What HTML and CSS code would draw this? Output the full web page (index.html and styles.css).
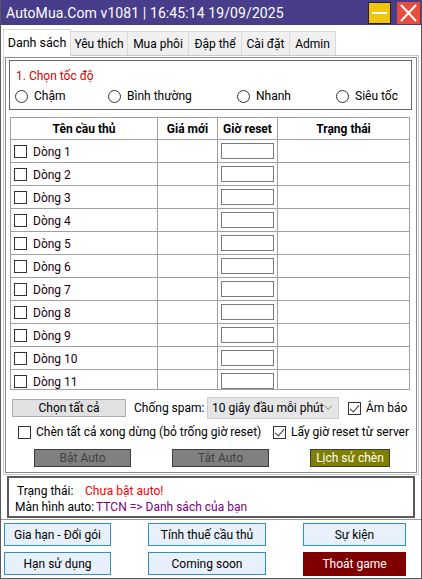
FILE: index.html
```html
<!DOCTYPE html>
<html lang="vi">
<head>
    <meta charset="UTF-8">
    <meta name="viewport" content="width=device-width, initial-scale=1.0">
    <title>AutoMua.Com</title>
    <link rel="stylesheet" href="styles.css">
</head>
<body>
<div class="window">
    <div class="titlebar">
        <span class="title">AutoMua.Com v1081 | 16:45:14 19/09/2025</span>
        <span class="tb-btn tb-min"><i></i></span>
        <span class="tb-btn tb-close">
            <svg width="23" height="22" viewBox="0 0 23 22"><path d="M4 3 L19 19 M19 3 L4 19" stroke="#fff" stroke-width="2" fill="none"/></svg>
        </span>
    </div>

    <div class="main">
        <div class="tabs">
            <span class="tab active">Danh sách</span>
            <span class="tab w57">Yêu thích</span>
            <span class="tab w61">Mua phôi</span>
            <span class="tab w53">Đập thể</span>
            <span class="tab w48">Cài đặt</span>
            <span class="tab w46">Admin</span>
        </div>

        <div class="tabpage">
            <div class="group">
                <div class="group-title">1. Chọn tốc độ</div>
                <div class="radios">
                    <span class="radio r1"><i></i>Chậm</span>
                    <span class="radio r2"><i></i>Bình thường</span>
                    <span class="radio r3"><i></i>Nhanh</span>
                    <span class="radio"><i></i>Siêu tốc</span>
                </div>
            </div>

            <div class="grid">
                <table>
                    <thead>
                        <tr>
                            <th class="c1">Tên cầu thủ</th>
                            <th class="c2">Giá mới</th>
                            <th class="c3">Giờ reset</th>
                            <th class="c4">Trạng thái</th>
                        </tr>
                    </thead>
                    <tbody id="rows"></tbody>
                </table>
            </div>

            <div class="ctl-row1">
                <span class="btn btn-all">Chọn tất cả</span>
                <span class="lbl-spam">Chống spam:</span>
                <span class="select">10 giây đầu mỗi phút
                    <svg width="9" height="6" viewBox="0 0 9 6"><path d="M0.5 0.5 L4.5 4.5 L8.5 0.5" stroke="#777" fill="none"/></svg>
                </span>
                <span class="chk checked"></span>
                <span class="chk-lbl">Âm báo</span>
            </div>

            <div class="ctl-row2">
                <span class="chk"></span>
                <span class="chk-lbl lbl-stop">Chèn tất cả xong dừng (bỏ trống giờ reset)</span>
                <span class="chk checked"></span>
                <span class="chk-lbl">Lấy giờ reset từ server</span>
            </div>

            <div class="ctl-row3">
                <span class="btn-auto b-on">Bật Auto</span>
                <span class="btn-auto b-off">Tắt Auto</span>
                <span class="btn-hist">Lịch sử chèn</span>
            </div>
        </div>

        <div class="status">
            <div><span class="st-lbl">Trạng thái:</span><span class="st-red">Chưa bật auto!</span></div>
            <div><span class="st-lbl2">Màn hình auto:</span><span class="st-purple">TTCN =&gt; Danh sách của bạn</span></div>
        </div>
    </div>

    <div class="footer">
        <span class="fbtn f1">Gia hạn - Đổi gói</span>
        <span class="fbtn f2">Tính thuế cầu thủ</span>
        <span class="fbtn f3">Sự kiện</span>
        <span class="fbtn f1">Hạn sử dụng</span>
        <span class="fbtn f2">Coming soon</span>
        <span class="fbtn f3 exit">Thoát game</span>
    </div>
</div>

<script>
    const $rows = document.getElementById('rows');
    for (let i = 1; i <= 11; i += 1) {
        const tr = document.createElement('tr');
        tr.innerHTML = '<td class="c1"><span class="chk"></span><span class="name">Dòng ' + i + '</span></td>'
            + '<td class="c2"></td>'
            + '<td class="c3"><span class="box"></span></td>'
            + '<td class="c4"></td>';
        $rows.appendChild(tr);
    }
</script>
</body>
</html>
```

FILE: styles.css
```css
* { box-sizing: border-box; }
body { margin: 0; font-family: Roboto, "Noto Sans", sans-serif; font-size: 12px; color: #000; background: #fff; white-space: nowrap; }

.window { width: 422px; height: 579px; border: 1px solid #5a5a5a; border-top: none; background: #fff; overflow: hidden; }

.titlebar { height: 25px; background: #483d8b; display: flex; align-items: center; margin: 0 -1px; }
.title { color: #fff; font-size: 14px; padding-left: 6px; flex: 1; letter-spacing: 0.1px; }
.tb-btn { width: 23px; height: 22px; display: flex; align-items: center; justify-content: center; }
.tb-min { background: #f1c40f; border: 1px solid #222; margin-right: 6px; }
.tb-min i { display: block; width: 15px; height: 2px; background: #fff; }
.tb-close { background: #e74c3c; margin-right: 2px; }

.main { border-bottom: 1px solid #9a9a9a; height: 495px; }

.tabs { height: 30px; display: flex; align-items: flex-end; padding-left: 2px; }
.tab { height: 24px; background: #f0f0f0; border: 1px solid #d9d9d9; border-bottom: none; border-left: none; display: flex; align-items: center; justify-content: center; }
.tab.active { height: 27px; width: 68px; background: #fff; border-left: 1px solid #d9d9d9; margin-bottom: -1px; position: relative; z-index: 1; padding-bottom: 2px; font-size: 12.5px; }
.w57 { width: 57px; }
.w61 { width: 61px; }
.w53 { width: 53px; }
.w48 { width: 48px; }
.w46 { width: 46px; }

.tabpage { margin: 0 2px; height: 420px; border: 1px solid #c8c8c8; box-shadow: inset 0 0 0 1px #fff, inset 0 0 0 2px #8a8a8a; padding: 4px 5px 0 5px; }

.group { width: 403px; height: 50px; border: 1px solid #666; padding: 6px 0 0 6px; }
.group-title { color: #d40000; height: 19px; line-height: 19px; }
.radios { display: flex; align-items: center; height: 20px; margin-left: -1px; }
.radio { display: flex; align-items: center; }
.radio i { width: 13px; height: 13px; border: 1px solid #333; border-radius: 50%; margin-right: 6px; background: #fff; }
.r1 { width: 93px; }
.r2 { width: 129px; }
.r3 { width: 99px; }

.grid { width: 400px; height: 273px; margin: 7px 0 0 1px; border: 1px solid #a0a0a0; overflow: hidden; }
table { border-collapse: collapse; table-layout: fixed; width: 400px; margin: -1px 0 0 -1px; }
th, td { border: 1px solid #a0a0a0; padding: 0; }
th { height: 22px; font-weight: bold; text-align: center; }
td { height: 23px; }
.c1 { width: 147px; }
.c2 { width: 60px; }
.c3 { width: 60px; }
td.c1 { padding-left: 3px; }
td.c1 .chk { vertical-align: middle; margin-right: 6px; }
.name { vertical-align: middle; display: inline-block; height: 16px; line-height: 18px; overflow: hidden; color: #1a0010; }
.box { display: block; width: 53px; height: 16px; border: 1px solid #7a7a7a; margin-left: 3px; }

.chk { display: inline-block; width: 13px; height: 13px; border: 1px solid #333; background: #fff; position: relative; flex: none; }
.chk.checked::after { content: ""; position: absolute; left: 3px; top: 0px; width: 4px; height: 8px; border: solid #333; border-width: 0 1px 1px 0; transform: rotate(40deg); }
.chk-lbl { margin-left: 5px; }

.ctl-row1 { display: flex; align-items: center; height: 22px; margin-top: 7px; }
.btn { height: 18px; display: flex; align-items: center; justify-content: center; background: #e1e1e1; border: 1px solid #adadad; }
.btn-all { width: 114px; margin-left: 3px; }
.lbl-spam { width: 73px; margin-left: 8px; }
.select { width: 132px; height: 22px; background: #e5e5e5; border: 1px solid #cfcfcf; display: flex; align-items: center; justify-content: space-between; padding: 0 6px 0 4px; margin-right: 9px; }

.ctl-row2 { display: flex; align-items: center; height: 14px; margin-top: 6px; padding-left: 9px; }
.lbl-stop { width: 237px; }

.ctl-row3 { display: flex; align-items: center; margin-top: 10px; padding-left: 25px; }
.btn-auto { width: 97px; height: 18px; display: flex; align-items: center; justify-content: center; background: #808080; border: 1px solid #3c3c3c; color: #404040; margin-right: 41px; }
.btn-hist { width: 80px; height: 18px; display: flex; align-items: center; justify-content: center; background: #808000; border: 1px solid #3c3c3c; color: #fff; }

.status { margin: 1px 6px 0 6px; height: 42px; border: 2px solid #5a5a5a; padding: 5px 0 0 8px; line-height: 16px; }
.st-lbl { display: inline-block; width: 68px; }
.st-lbl2 { margin-left: -2px; }
.st-red { color: #ff0000; }
.st-purple { color: #800080; margin-left: 2px; }

.footer { display: grid; grid-template-columns: 107px 118px 103px; column-gap: 37px; row-gap: 6px; padding: 3px 0 0 3px; }
.fbtn { height: 23px; display: flex; align-items: center; justify-content: center; background: #e8f1fb; border: 1px solid #2d8fd0; }
.fbtn.exit { background: #800000; border-color: #800000; color: #fff; height: 24px; }
```
